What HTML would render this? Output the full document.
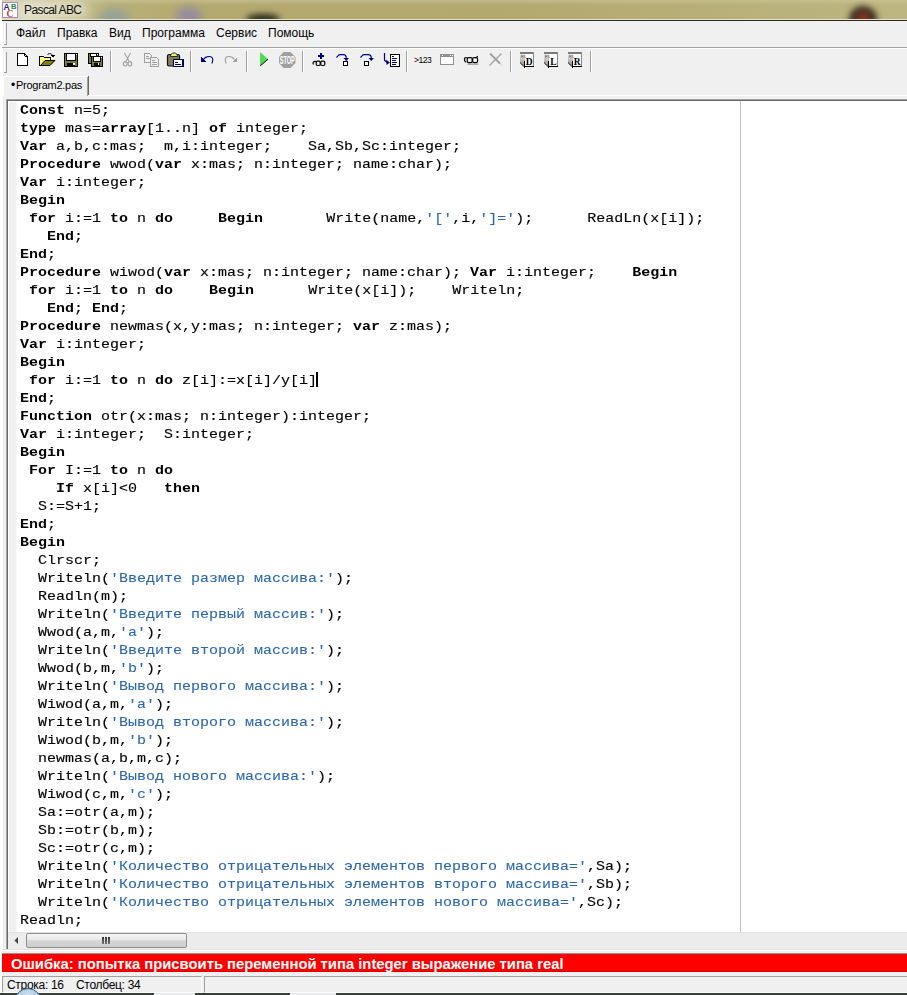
<!DOCTYPE html>
<html><head><meta charset="utf-8">
<style>
*{margin:0;padding:0;box-sizing:border-box}
html,body{width:907px;height:995px;overflow:hidden;background:#f0f0f0;font-family:"Liberation Sans",sans-serif}
.abs{position:absolute}
#title{left:0;top:0;width:907px;height:20px;background:linear-gradient(90deg,#d9d7c3 0%,#cfcbab 6%,#bdb37d 14%,#b8ad74 40%,#b5aa70 70%,#bab076 100%)}
#titleline{left:0;top:20px;width:907px;height:1px;background:#2a2a24}
#ttext{left:24px;top:2px;font-size:12px;letter-spacing:-0.6px;color:#111;line-height:16px}
.menu{top:25px;font-size:12px;line-height:16px;color:#000}
.cl{position:absolute;left:20px;height:18px;font-family:"Liberation Mono",monospace;font-size:15px;line-height:22.5px;white-space:pre;color:#000;transform:scaleY(0.8);transform-origin:0 0;-webkit-text-stroke:0.15px #000}
#code b{-webkit-text-stroke:0}
.s{-webkit-text-stroke:0.1px #2a66ae}
#code b{font-weight:bold}
.s{color:#2a66ae}
</style></head><body>
<!-- title bar -->
<div class="abs" style="left:0;top:0;width:907px;height:19px;overflow:hidden;background:linear-gradient(90deg,#dcdbc8 0px,#d6d3b8 30px,#c8c296 70px,#b9b078 110px,#b4aa70 200px,#b3a96f 500px,#b8af78 700px,#bdb680 907px)">
 <div class="abs" style="left:0;top:0;width:907px;height:5px;background:linear-gradient(rgba(205,200,160,.55),rgba(205,200,160,0))"></div>
 <div class="abs" style="left:98px;top:9px;width:32px;height:18px;border-radius:50%;background:#8aa0a0;opacity:.8;filter:blur(4px)"></div>
 <div class="abs" style="left:176px;top:7px;width:26px;height:18px;border-radius:50%;background:#8a80b0;opacity:.75;filter:blur(4px)"></div>
 <div class="abs" style="left:246px;top:14px;width:34px;height:10px;border-radius:50%;background:#2a281c;filter:blur(3px)"></div>
 <div class="abs" style="left:849px;top:6px;width:28px;height:26px;border-radius:50%;background:#3c3226;filter:blur(3px)"></div>
 <div class="abs" style="left:856px;top:12px;width:14px;height:12px;border-radius:50%;background:#8a3020;filter:blur(3px)"></div>
 <div class="abs" style="left:20px;top:2px;width:68px;height:16px;border-radius:8px;background:#f4f2e4;opacity:.5;filter:blur(4px)"></div>
</div>
<div class="abs" style="left:0;top:19px;width:907px;height:1px;background:#e6e2c8"></div>
<div id="titleline" class="abs"></div>
<div class="abs" style="left:0;top:0;width:2px;height:21px;background:#fafaf6"></div>
<svg class="abs" style="left:0;top:0" width="20" height="20" viewBox="0 0 20 20">
 <rect x="2.5" y="2.5" width="15" height="15" fill="#fff" stroke="#b088b8" stroke-width="1"/>
 <text x="3.6" y="10.2" font-family="Liberation Sans" font-weight="bold" font-size="8.6" fill="#22287a">A</text>
 <text x="11" y="9.2" font-family="Liberation Sans" font-weight="bold" font-size="7.6" fill="#2a8a3a">B</text>
 <text x="6.6" y="16.8" font-family="Liberation Serif" font-weight="bold" font-size="9.5" fill="#c83838">C</text>
</svg>
<div id="ttext" class="abs">Pascal ABC</div>

<!-- window left edge -->
<div class="abs" style="left:0;top:21px;width:3px;height:972px;background:#fff"></div>
<div class="abs" style="left:3px;top:97px;width:1px;height:896px;background:#e8e8e8"></div>

<!-- menu bar -->
<div class="abs" style="left:4px;top:23px;width:1px;height:22px;background:#fff"></div>
<div class="abs" style="left:6px;top:23px;width:1px;height:22px;background:#a0a0a0"></div>
<div class="abs" style="left:4px;top:44px;width:3px;height:1px;background:#a0a0a0"></div>
<div class="abs menu" style="left:16px">Файл</div>
<div class="abs menu" style="left:57px">Правка</div>
<div class="abs menu" style="left:109px">Вид</div>
<div class="abs menu" style="left:142px">Программа</div>
<div class="abs menu" style="left:216px">Сервис</div>
<div class="abs menu" style="left:268px">Помощь</div>
<div class="abs" style="left:2px;top:47px;width:905px;height:1px;background:#a0a0a0"></div>
<div class="abs" style="left:2px;top:48px;width:905px;height:1px;background:#fff"></div>

<!-- toolbar -->
<div class="abs" style="left:4px;top:52px;width:1px;height:21px;background:#fff"></div>
<div class="abs" style="left:6px;top:52px;width:1px;height:21px;background:#a0a0a0"></div>
<div class="abs" style="left:4px;top:72px;width:3px;height:1px;background:#a0a0a0"></div>
<svg class="abs" style="left:0;top:0" width="600" height="76" viewBox="0 0 600 76" shape-rendering="crispEdges">
 <!-- separators -->
 <g fill="#a0a0a0">
  <rect x="110" y="51" width="1" height="21"/><rect x="190" y="51" width="1" height="21"/>
  <rect x="246" y="51" width="1" height="21"/><rect x="302" y="51" width="1" height="21"/>
  <rect x="406" y="51" width="1" height="21"/><rect x="510" y="51" width="1" height="21"/>
  <rect x="590" y="51" width="1" height="21"/>
 </g>
 <g fill="#fff">
  <rect x="111" y="51" width="1" height="21"/><rect x="191" y="51" width="1" height="21"/>
  <rect x="247" y="51" width="1" height="21"/><rect x="303" y="51" width="1" height="21"/>
  <rect x="407" y="51" width="1" height="21"/><rect x="511" y="51" width="1" height="21"/>
  <rect x="591" y="51" width="1" height="21"/>
 </g>
 <!-- new -->
 <path d="M17.5,53.5 H24.5 L27.5,56.5 V65.5 H17.5 Z" fill="#fff" stroke="#000" stroke-width="1"/>
 <rect x="24" y="54" width="1" height="2" fill="#000"/><rect x="25" y="56" width="2" height="1" fill="#000"/>
 <!-- open -->
 <path d="M39,56 H43 L44,57 H50 V60 H45 L41,65 H39 Z" fill="#ffff80" stroke="none"/>
 <path d="M39.5,65.5 V56.5 H43.5 L44.5,57.5 H50.5 V59.5" fill="none" stroke="#000"/>
 <path d="M41,65 L45,60 H55 L50,65 Z" fill="#808000"/>
 <path d="M40.5,65.5 L45,60.5 H55 M40,65.5 H50 L55,60.5" fill="none" stroke="#000" shape-rendering="auto"/>
 <path d="M47.5,55 C48.5,53 51.5,53 52.5,55.5" fill="none" stroke="#000" stroke-width="1" shape-rendering="auto"/>
 <path d="M51,55 H55 L53,57.5 Z" fill="#000"/>
 <!-- save -->
 <rect x="64" y="53" width="14" height="14" fill="#000"/>
 <rect x="65" y="54" width="12" height="12" fill="#7c7c2c"/>
 <rect x="66" y="54" width="10" height="7" fill="#000"/>
 <rect x="67" y="54" width="8" height="6" fill="#fff"/>
 <rect x="67" y="63" width="8" height="3" fill="#000"/>
 <rect x="73" y="63" width="2" height="2" fill="#fff"/>
 <rect x="76" y="54" width="1" height="1" fill="#fff"/>
 <!-- save all -->
 <rect x="88" y="53" width="11" height="11" fill="#000"/>
 <rect x="89" y="54" width="9" height="9" fill="#7c7c2c"/>
 <rect x="90" y="54" width="7" height="3" fill="#000"/>
 <rect x="91" y="54" width="5" height="2" fill="#fff"/>
 <rect x="97" y="54" width="1" height="1" fill="#fff"/>
 <rect x="91" y="56" width="12" height="11" fill="#000"/>
 <rect x="92" y="57" width="10" height="9" fill="#7c7c2c"/>
 <rect x="93" y="57" width="8" height="5" fill="#000"/>
 <rect x="94" y="57" width="6" height="4" fill="#fff"/>
 <rect x="94" y="63" width="6" height="3" fill="#000"/>
 <rect x="98" y="63" width="1" height="2" fill="#fff"/>
 <rect x="101" y="57" width="1" height="1" fill="#fff"/>
 <!-- cut (disabled) -->
 <g fill="none" stroke="#a0a0a0" stroke-width="1.1" shape-rendering="auto">
  <path d="M124.5,53 L129,61.2 M130.5,53 L126,61.2"/>
  <ellipse cx="125.3" cy="63.8" rx="1.9" ry="2.2"/><ellipse cx="129.9" cy="63.8" rx="1.9" ry="2.2"/>
 </g>
 <!-- copy (disabled) -->
 <path d="M144.5,53.5 H149.5 L151.5,55.5 V62.5 H144.5 Z" fill="#f0f0f0" stroke="#a0a0a0"/>
 <path d="M150.5,57.5 H156.5 L158.5,59.5 V66.5 H150.5 Z" fill="#f0f0f0" stroke="#a0a0a0"/>
 <g fill="#a0a0a0"><rect x="146" y="56" width="3" height="1"/><rect x="146" y="58" width="4" height="1"/><rect x="152" y="60" width="3" height="1"/><rect x="152" y="62" width="5" height="1"/><rect x="152" y="64" width="5" height="1"/></g>
 <!-- paste -->
 <rect x="167.5" y="54.5" width="12" height="11.5" rx="1.5" fill="#7f7f58" stroke="#101010" stroke-width="1.2" shape-rendering="auto"/>
 <path d="M170.5,56.5 C170.5,54 172,53 174,53 C176,53 177.5,54 177.5,56.5 Z" fill="#f0f080" stroke="#303020" stroke-width="1" shape-rendering="auto"/>
 <rect x="173" y="59" width="11" height="8" fill="#000060"/>
 <rect x="174" y="60" width="8" height="6" fill="#fff"/>
 <rect x="175" y="62" width="3" height="1" fill="#000060"/><rect x="175" y="64" width="6" height="1" fill="#000060"/>
 <!-- undo -->
 <path d="M201,57 V62 H206 Z" fill="#000080"/>
 <path d="M203.5,59.5 C205,57 207,56.5 209,56.5 C211.5,56.5 212.8,58 212.8,59.8 C212.8,61 212.5,62 211.8,63.5" fill="none" stroke="#000080" stroke-width="1.1" shape-rendering="auto"/>
 <!-- redo -->
 <path d="M237,57 V62 H232 Z" fill="#a0a0a0"/>
 <path d="M234.5,59.5 C233,57 231,56.5 229,56.5 C226.5,56.5 225.2,58 225.2,59.8 C225.2,61 225.5,62 226.2,63.5" fill="none" stroke="#a0a0a0" stroke-width="1.1" shape-rendering="auto"/>
 <!-- play -->
 <path d="M260,52 L268,59 L260,66 Z" fill="#50dc50" shape-rendering="auto"/>
 <path d="M260.3,65.8 L268,59.2" stroke="#000" stroke-width="1" shape-rendering="auto"/>
 <!-- stop -->
 <path d="M283.5,52 H290.5 L295.5,57 V63 L290.5,68 H283.5 L279,63 V57 Z" fill="#a0a0a0" shape-rendering="auto"/>
 <text x="0" y="0" font-family="Liberation Sans" font-weight="bold" font-size="9" fill="#fff" text-anchor="middle" shape-rendering="auto" transform="translate(287.3,63.8) scale(0.62,1.12)">STOP</text>
 <!-- add watch -->
 <rect x="320" y="53" width="2" height="6" fill="#000080"/><rect x="318" y="55" width="6" height="2" fill="#000080"/>
 <g fill="none" stroke="#000" stroke-width="1.2" shape-rendering="auto">
  <rect x="316.2" y="61.2" width="4" height="4.3" rx="1.2"/><rect x="320.8" y="61.2" width="4" height="4.3" rx="1.2"/>
  <path d="M316,61.5 C313,61 312.5,63 313.5,64.5"/>
 </g>
 <!-- step into -->
 <path d="M336.5,57.5 L338.2,55.6 Q339,54.6 340.2,54.6 H343.2 Q346.2,54.6 346.2,57.6 V58.2" fill="none" stroke="#000080" stroke-width="1.15" shape-rendering="auto"/>
 <path d="M343.5,58 H349 L346.25,61 Z" fill="#000080" shape-rendering="auto"/>
 <rect x="343.5" y="61.5" width="4" height="4" fill="#fff" stroke="#000" stroke-width="1"/>
 <!-- step over -->
 <path d="M360.5,57.5 L362.2,55.6 Q363,54.6 364.2,54.6 H368.2 Q371.2,54.6 371.2,57.6 V58.2" fill="none" stroke="#000080" stroke-width="1.15" shape-rendering="auto"/>
 <path d="M368.5,58 H374 L371.25,61 Z" fill="#000080" shape-rendering="auto"/>
 <rect x="364.5" y="61.5" width="4" height="4" fill="#fff" stroke="#000" stroke-width="1"/>
 <!-- run to cursor -->
 <path d="M384.5,53 V60.2 L386.8,62.3" fill="none" stroke="#000080" stroke-width="1.2" shape-rendering="auto"/>
 <path d="M386,59.8 L390,62.6 L386.6,65 Z" fill="#000080" shape-rendering="auto"/>
 <rect x="390" y="54" width="10" height="13" fill="#000"/>
 <rect x="391" y="55" width="8" height="11" fill="#fff"/>
 <g fill="#000080"><rect x="392" y="56" width="2" height="1"/><rect x="392" y="58" width="5" height="1"/><rect x="392" y="60" width="4" height="1"/><rect x="392" y="62" width="5" height="1"/><rect x="392" y="64" width="4" height="1"/></g>
 <!-- >123 -->
 <text x="414" y="63.3" font-family="Liberation Sans" font-size="8.6" fill="#000" letter-spacing="-0.5" shape-rendering="auto">&gt;123</text>
 <!-- window (disabled) -->
 <rect x="440.5" y="54.5" width="13" height="10" fill="#fff" stroke="#909090"/>
 <rect x="441" y="55" width="12" height="2" fill="#909090"/>
 <g fill="#fff"><rect x="442" y="55" width="1" height="1"/><rect x="450" y="55" width="1" height="1"/><rect x="452" y="55" width="1" height="1"/></g>
 <!-- glasses -->
 <path d="M467,63.5 H479 L478,65 H468 Z" fill="#a8a8a8" shape-rendering="auto"/>
 <g fill="none" stroke="#000" stroke-width="1.2" shape-rendering="auto">
  <rect x="467.2" y="57.6" width="5" height="5" rx="1.6"/><rect x="472.6" y="57.6" width="5" height="5" rx="1.6"/>
  <path d="M467,58 C465.2,57 464,58 464.6,60.5 L465.8,62.3"/>
  <path d="M476.5,57.6 L477.6,56"/>
 </g>
 <!-- X (disabled) -->
 <g stroke="#a0a0a0" shape-rendering="auto"><path d="M490,53.5 L500,63.5" stroke-width="2"/><path d="M500,63.5 L502,65.5" stroke-width="1" stroke-dasharray="1 1"/><path d="M501.5,53.5 L489.5,65.5" stroke-width="1.3"/></g>
 <!-- D L R -->
 <g transform="translate(520,52)">
  <path d="M0,0 H14 V15 H4 L0,11 Z" fill="#fff"/>
  <rect x="0" y="0" width="14" height="2" fill="#7a7a7a"/>
  <rect x="13" y="0" width="1" height="15" fill="#8a8a8a"/>
  <defs><linearGradient id="gD" x1="0" y1="0" x2="0" y2="1"><stop offset="0" stop-color="#e8e8e8"/><stop offset="1" stop-color="#8c8c8c"/></linearGradient></defs>
  <path d="M0,2 H5 V15 H4 L0,11 Z" fill="url(#gD)"/>
  <path d="M0.3,10.7 L4.3,14.7" fill="none" stroke="#000" stroke-width="1.1" stroke-dasharray="1 0.6" shape-rendering="auto"/>
  <rect x="4" y="9" width="1" height="7" fill="#000"/>
  <rect x="4" y="14" width="10" height="1" fill="#000"/>
  <text x="1" y="5.8" font-family="Liberation Sans" font-size="4" fill="#303030">F5</text>
  <text x="9.3" y="13.3" font-family="Liberation Serif" font-weight="bold" font-size="9.5" fill="#000" text-anchor="middle" shape-rendering="auto">D</text>
 </g><g transform="translate(544,52)">
  <path d="M0,0 H14 V15 H4 L0,11 Z" fill="#fff"/>
  <rect x="0" y="0" width="14" height="2" fill="#7a7a7a"/>
  <rect x="13" y="0" width="1" height="15" fill="#8a8a8a"/>
  <defs><linearGradient id="gL" x1="0" y1="0" x2="0" y2="1"><stop offset="0" stop-color="#e8e8e8"/><stop offset="1" stop-color="#8c8c8c"/></linearGradient></defs>
  <path d="M0,2 H5 V15 H4 L0,11 Z" fill="url(#gL)"/>
  <path d="M0.3,10.7 L4.3,14.7" fill="none" stroke="#000" stroke-width="1.1" stroke-dasharray="1 0.6" shape-rendering="auto"/>
  <rect x="4" y="9" width="1" height="7" fill="#000"/>
  <rect x="4" y="14" width="10" height="1" fill="#000"/>
  <text x="1" y="5.8" font-family="Liberation Sans" font-size="4" fill="#303030">F5</text>
  <text x="9.3" y="13.3" font-family="Liberation Serif" font-weight="bold" font-size="9.5" fill="#000" text-anchor="middle" shape-rendering="auto">L</text>
 </g><g transform="translate(568,52)">
  <path d="M0,0 H14 V15 H4 L0,11 Z" fill="#fff"/>
  <rect x="0" y="0" width="14" height="2" fill="#7a7a7a"/>
  <rect x="13" y="0" width="1" height="15" fill="#8a8a8a"/>
  <defs><linearGradient id="gR" x1="0" y1="0" x2="0" y2="1"><stop offset="0" stop-color="#e8e8e8"/><stop offset="1" stop-color="#8c8c8c"/></linearGradient></defs>
  <path d="M0,2 H5 V15 H4 L0,11 Z" fill="url(#gR)"/>
  <path d="M0.3,10.7 L4.3,14.7" fill="none" stroke="#000" stroke-width="1.1" stroke-dasharray="1 0.6" shape-rendering="auto"/>
  <rect x="4" y="9" width="1" height="7" fill="#000"/>
  <rect x="4" y="14" width="10" height="1" fill="#000"/>
  <text x="1" y="5.8" font-family="Liberation Sans" font-size="4" fill="#303030">F5</text>
  <text x="9.3" y="13.3" font-family="Liberation Serif" font-weight="bold" font-size="9.5" fill="#000" text-anchor="middle" shape-rendering="auto">R</text>
 </g>
</svg>


<!-- tab strip -->
<div class="abs" style="left:3px;top:76px;width:85px;height:1px;background:#fff"></div>
<div class="abs" style="left:3px;top:76px;width:1px;height:20px;background:#fff"></div>
<div class="abs" style="left:87px;top:77px;width:1px;height:19px;background:#a0a0a0"></div>
<div class="abs" style="left:88px;top:76px;width:1px;height:20px;background:#696969"></div>
<div class="abs" style="left:88px;top:95px;width:819px;height:1px;background:#fff"></div>
<div class="abs" style="left:11px;top:78px;font-size:12px;line-height:14px;color:#000;white-space:pre">•</div>
<div class="abs" style="left:16px;top:78px;font-size:11px;letter-spacing:-0.25px;line-height:14px;color:#000;white-space:pre">Program2.pas</div>

<!-- editor -->
<div class="abs" style="left:6px;top:99px;width:901px;height:1px;background:#a0a0a0"></div>
<div class="abs" style="left:6px;top:99px;width:1px;height:851px;background:#a0a0a0"></div>
<div class="abs" style="left:7px;top:100px;width:900px;height:1px;background:#696969"></div>
<div class="abs" style="left:7px;top:100px;width:1px;height:850px;background:#696969"></div>
<div class="abs" style="left:8px;top:101px;width:899px;height:831px;background:#fff"></div>
<div class="abs" style="left:9px;top:102px;width:7px;height:830px;background:#f0f0f0"></div>
<div class="abs" style="left:16px;top:102px;width:1px;height:830px;background:#f8f8f8"></div>
<div class="abs" style="left:740px;top:101px;width:1px;height:831px;background:#c0c0c0"></div>
<div id="code">
<div class="cl" style="top:103px"><b>Const</b> n=5;</div>
<div class="cl" style="top:121px"><b>type</b> mas=<b>array</b>[1..n] <b>of</b> integer;</div>
<div class="cl" style="top:139px"><b>Var</b> a,b,c:mas;  m,i:integer;    Sa,Sb,Sc:integer;</div>
<div class="cl" style="top:157px"><b>Procedure</b> wwod(<b>var</b> x:mas; n:integer; name:char);</div>
<div class="cl" style="top:175px"><b>Var</b> i:integer;</div>
<div class="cl" style="top:193px"><b>Begin</b></div>
<div class="cl" style="top:211px"> <b>for</b> i:=1 <b>to</b> n <b>do</b>     <b>Begin</b>       Write(name,<span class="s">'['</span>,i,<span class="s">']='</span>);      ReadLn(x[i]);</div>
<div class="cl" style="top:229px">   <b>End</b>;</div>
<div class="cl" style="top:247px"><b>End</b>;</div>
<div class="cl" style="top:265px"><b>Procedure</b> wiwod(<b>var</b> x:mas; n:integer; name:char); <b>Var</b> i:integer;    <b>Begin</b></div>
<div class="cl" style="top:283px"> <b>for</b> i:=1 <b>to</b> n <b>do</b>    <b>Begin</b>      Write(x[i]);    Writeln;</div>
<div class="cl" style="top:301px">   <b>End</b>; <b>End</b>;</div>
<div class="cl" style="top:319px"><b>Procedure</b> newmas(x,y:mas; n:integer; <b>var</b> z:mas);</div>
<div class="cl" style="top:337px"><b>Var</b> i:integer;</div>
<div class="cl" style="top:355px"><b>Begin</b></div>
<div class="cl" style="top:373px"> <b>for</b> i:=1 <b>to</b> n <b>do</b> z[i]:=x[i]/y[i]</div>
<div class="cl" style="top:391px"><b>End</b>;</div>
<div class="cl" style="top:409px"><b>Function</b> otr(x:mas; n:integer):integer;</div>
<div class="cl" style="top:427px"><b>Var</b> i:integer;  S:integer;</div>
<div class="cl" style="top:445px"><b>Begin</b></div>
<div class="cl" style="top:463px"> <b>For</b> I:=1 <b>to</b> n <b>do</b></div>
<div class="cl" style="top:481px">    <b>If</b> x[i]&lt;0   <b>then</b></div>
<div class="cl" style="top:499px">  S:=S+1;</div>
<div class="cl" style="top:517px"><b>End</b>;</div>
<div class="cl" style="top:535px"><b>Begin</b></div>
<div class="cl" style="top:553px">  Clrscr;</div>
<div class="cl" style="top:571px">  Writeln(<span class="s">'Введите размер массива:'</span>);</div>
<div class="cl" style="top:589px">  Readln(m);</div>
<div class="cl" style="top:607px">  Writeln(<span class="s">'Введите первый массив:'</span>);</div>
<div class="cl" style="top:625px">  Wwod(a,m,<span class="s">'a'</span>);</div>
<div class="cl" style="top:643px">  Writeln(<span class="s">'Введите второй массив:'</span>);</div>
<div class="cl" style="top:661px">  Wwod(b,m,<span class="s">'b'</span>);</div>
<div class="cl" style="top:679px">  Writeln(<span class="s">'Вывод первого массива:'</span>);</div>
<div class="cl" style="top:697px">  Wiwod(a,m,<span class="s">'a'</span>);</div>
<div class="cl" style="top:715px">  Writeln(<span class="s">'Вывод второго массива:'</span>);</div>
<div class="cl" style="top:733px">  Wiwod(b,m,<span class="s">'b'</span>);</div>
<div class="cl" style="top:751px">  newmas(a,b,m,c);</div>
<div class="cl" style="top:769px">  Writeln(<span class="s">'Вывод нового массива:'</span>);</div>
<div class="cl" style="top:787px">  Wiwod(c,m,<span class="s">'c'</span>);</div>
<div class="cl" style="top:805px">  Sa:=otr(a,m);</div>
<div class="cl" style="top:823px">  Sb:=otr(b,m);</div>
<div class="cl" style="top:841px">  Sc:=otr(c,m);</div>
<div class="cl" style="top:859px">  Writeln(<span class="s">'Количество отрицательных элементов первого массива='</span>,Sa);</div>
<div class="cl" style="top:877px">  Writeln(<span class="s">'Количество отрицательных элементов второго массива='</span>,Sb);</div>
<div class="cl" style="top:895px">  Writeln(<span class="s">'Количество отрицательных элементов нового массива='</span>,Sc);</div>
<div class="cl" style="top:913px">Readln;</div>
</div>
<div class="abs" style="left:316px;top:372px;width:2px;height:15px;background:#000"></div>

<!-- horizontal scrollbar -->
<div class="abs" style="left:8px;top:932px;width:899px;height:17px;background:#ececec;border-top:1px solid #e2e2e2"></div>
<svg class="abs" style="left:8px;top:932px" width="18" height="17"><path d="M10,5 L10,12 L6.5,8.5 Z" fill="#404040"/></svg>
<div class="abs" style="left:26px;top:933px;width:161px;height:15px;border:1px solid #8e8e8e;border-radius:2px;background:linear-gradient(#f4f4f4,#e8e8e8 45%,#d6d6d6 52%,#cdcdcd)"></div>
<div class="abs" style="left:102px;top:937px;width:2px;height:7px;background:linear-gradient(#333,#777)"></div>
<div class="abs" style="left:105px;top:937px;width:2px;height:7px;background:linear-gradient(#333,#777)"></div>
<div class="abs" style="left:108px;top:937px;width:2px;height:7px;background:linear-gradient(#333,#777)"></div>

<!-- error bar -->
<div class="abs" style="left:2px;top:949px;width:905px;height:1px;background:#e2e2e2"></div>
<div class="abs" style="left:2px;top:950px;width:905px;height:1px;background:#ffffff"></div>
<div class="abs" style="left:2px;top:953px;width:905px;height:1px;background:#b08888"></div>
<div class="abs" style="left:2px;top:954px;width:905px;height:1px;background:#c41a1a"></div>
<div class="abs" style="left:2px;top:955px;width:905px;height:16px;background:#ff0000"></div>
<div class="abs" style="left:2px;top:971px;width:905px;height:1px;background:#dc0000"></div>
<div class="abs" style="left:11px;top:956px;font-size:14.8px;line-height:17px;font-weight:bold;color:#fff;white-space:pre">Ошибка: попытка присвоить переменной типа integer выражение типа real</div>

<!-- status bar -->
<div class="abs" style="left:2px;top:976px;width:200px;height:17px;border-top:1px solid #a0a0a0;border-left:1px solid #a0a0a0;border-right:1px solid #fff;border-bottom:1px solid #fff"></div>
<div class="abs" style="left:204px;top:976px;width:703px;height:17px;border-top:1px solid #a0a0a0;border-left:1px solid #a0a0a0;border-bottom:1px solid #fff"></div>
<div class="abs" style="left:7px;top:978px;font-size:12px;letter-spacing:-0.3px;line-height:15px;color:#000;white-space:pre">Строка: 16</div>
<div class="abs" style="left:76px;top:978px;font-size:12px;letter-spacing:-0.3px;line-height:15px;color:#000;white-space:pre">Столбец: 34</div>

<!-- taskbar -->
<div class="abs" style="left:0;top:993px;width:907px;height:2px;background:#3a3e3a"></div>
<div class="abs" style="left:154px;top:993px;width:41px;height:2px;background:#e8eaec"></div>
<div class="abs" style="left:290px;top:993px;width:46px;height:2px;background:#e8eaec"></div>
<div class="abs" style="left:14px;top:988px;width:28px;height:28px;border-radius:50%;background:radial-gradient(circle at 50% 30%,#d8e8f4,#8cb4d4 70%);border:1px solid #3a5a7a"></div>
</body></html>
